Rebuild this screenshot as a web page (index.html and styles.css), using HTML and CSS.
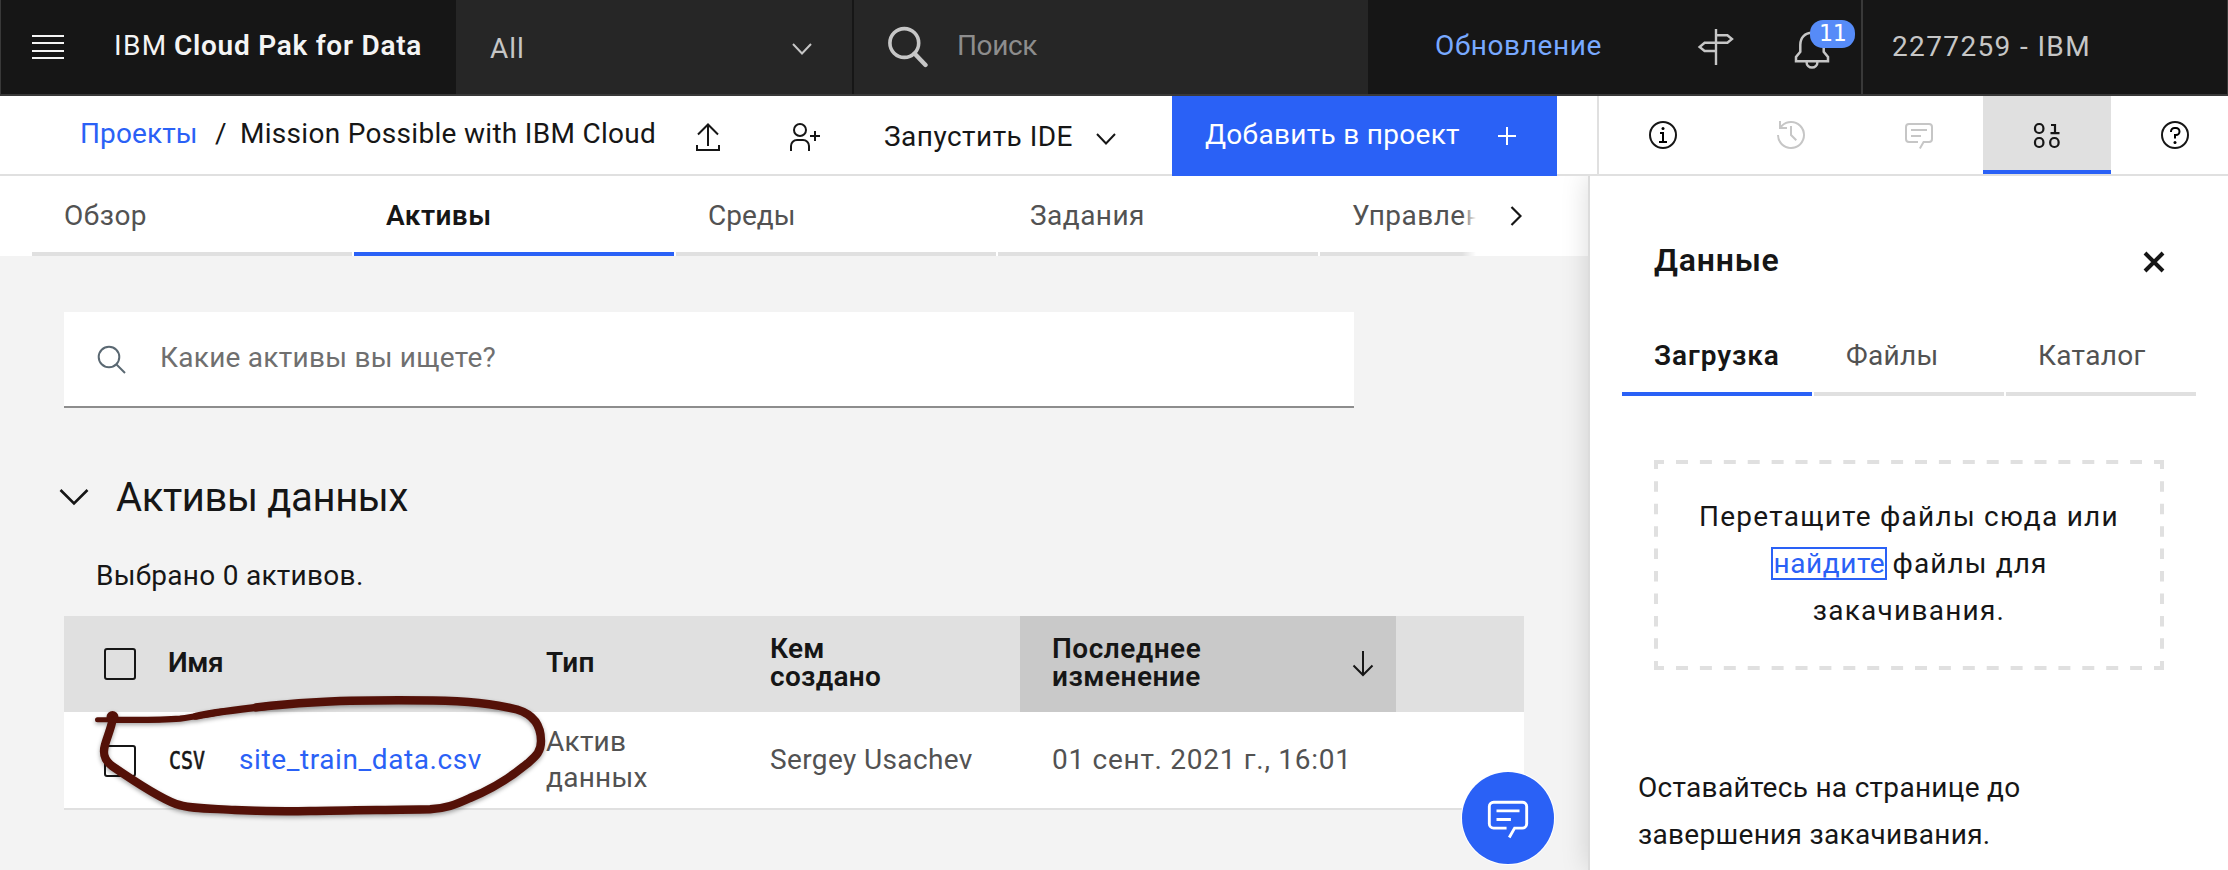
FILE: index.html
```html
<!DOCTYPE html>
<html lang="ru">
<head>
<meta charset="utf-8">
<title>IBM Cloud Pak for Data</title>
<link rel="stylesheet" href="styles.css">
</head>
<body>
<header class="topbar">
  <div class="brand">
    <div class="menu"><i></i><i></i><i></i><i></i></div>
    <div class="brand-name"><span class="ibm">IBM</span><b>Cloud Pak for Data</b></div>
  </div>
  <div class="scope"><span class="all">All</span>
    <svg width="20" height="12" viewBox="0 0 20 12"><path d="M1 1l9 9.5L19 1" fill="none" stroke="#c6c6c6" stroke-width="2"/></svg>
  </div>
  <div class="search">
    <svg width="40" height="42" viewBox="0 0 40 42"><circle cx="16.3" cy="17" r="14.4" fill="none" stroke="#c6c6c6" stroke-width="3.6"/><path d="M26.5 27.5L37.5 39" stroke="#c6c6c6" stroke-width="4.4" stroke-linecap="round"/></svg>
    <span class="find">Поиск</span>
  </div>
  <div class="tools">
    <a class="upgrade">Обновление</a>
    <svg class="sign" width="40" height="40" viewBox="0 0 40 40" fill="none" stroke="#c6c6c6" stroke-width="2.4"><path d="M20 2v36M20 8.2h11.4l4.6 3.8-4.6 3.8H8.6L3.6 20l5 4H20"/></svg>
    <div class="bell">
      <svg width="40" height="40" viewBox="0 0 40 40" fill="none" stroke="#c6c6c6" stroke-width="2.5"><path d="M19 3.7c-7 0-11.7 5-11.7 12v7L3 28v4.2h32V28l-4.3-5.3v-7c0-7-4.7-12-11.7-12zM13.5 32.5c0 8 11 8 11 0"/></svg>
      <span class="badge">11</span>
    </div>
  </div>
  <div class="account"><span>2277259 - IBM</span></div>
</header>

<div class="actionbar">
  <div class="crumbs"><a>Проекты</a><span class="slash">/</span><span class="project">Mission Possible with IBM Cloud</span></div>
  <svg class="upload" width="32" height="32" viewBox="0 0 32 32" fill="none" stroke="#161616" stroke-width="2"><path d="M16 25V4M6 13.5L16 3.5l10 10M5 24v5h22v-5"/></svg>
  <svg class="adduser" width="32" height="32" viewBox="0 0 32 32" fill="none" stroke="#161616" stroke-width="2"><circle cx="12" cy="9" r="6"/><path d="M3 30v-5a6 6 0 0 1 6-6h6a6 6 0 0 1 6 6v5M27 10v10M22 15h10"/></svg>
  <span class="ide">Запустить IDE</span>
  <svg class="ide-arrow" width="20" height="12" viewBox="0 0 20 12"><path d="M1 1l9 9.5L19 1" fill="none" stroke="#161616" stroke-width="2"/></svg>
  <button class="add"><span>Добавить в проект</span>
    <svg width="20" height="20" viewBox="0 0 20 20"><path d="M10 1v18M1 10h18" stroke="#fff" stroke-width="2"/></svg>
  </button>
  <nav class="toggles">
    <div><svg width="32" height="32" viewBox="0 0 32 32"><circle cx="16" cy="16" r="13" fill="none" stroke="#161616" stroke-width="2"/><circle cx="16" cy="9.5" r="1.5"/><path d="M17 22v-9h-4v2h2v7h-3v2h8v-2z"/></svg></div>
    <div><svg width="32" height="32" viewBox="0 0 32 32" fill="#c6c6c6"><path d="M20.59 22L15 16.41V7h2v8.58l5 5.01z"/><path d="M16 2A13.94 13.94 0 0 0 6 6.23V2H4v8h8V8H7.08A12 12 0 1 1 4 16H2A14 14 0 1 0 16 2z"/></svg></div>
    <div><svg width="32" height="32" viewBox="0 0 32 32" fill="#c6c6c6"><path d="M17.74 30L16 29l4-7h6a2 2 0 0 0 2-2V8a2 2 0 0 0-2-2H6a2 2 0 0 0-2 2v12a2 2 0 0 0 2 2h9v2H6a4 4 0 0 1-4-4V8a4 4 0 0 1 4-4h20a4 4 0 0 1 4 4v12a4 4 0 0 1-4 4h-4.84z"/><path d="M8 10h16v2H8zM8 16h10v2H8z"/></svg></div>
    <div class="on"><svg width="32" height="32" viewBox="0 0 32 32" fill="none" stroke="#161616" stroke-width="2.2"><rect x="4" y="5" width="8.4" height="9" rx="4"/><rect x="4" y="19" width="8.4" height="9" rx="4"/><rect x="19.2" y="19" width="8.4" height="9" rx="4"/><path d="M20 6h4v8M19.5 14.2h9"/></svg></div>
    <div><svg width="32" height="32" viewBox="0 0 32 32"><circle cx="16" cy="16" r="13" fill="none" stroke="#161616" stroke-width="2"/><circle cx="16" cy="23.5" r="1.5"/><path d="M17 8h-1.5a4.5 4.5 0 0 0-4.5 4.5v.5h2v-.5a2.5 2.5 0 0 1 2.5-2.5H17a2.5 2.5 0 0 1 0 5h-2v4.5h2V17a4.5 4.5 0 0 0 0-9z"/></svg></div>
  </nav>
</div>

<div class="body">
  <main class="main">
    <nav class="tabs">
      <div class="tablist">
        <div>Обзор</div><div class="active">Активы</div><div class="envs">Среды</div><div>Задания</div><div>Управление</div>
      </div>
      <div class="next"><svg width="12" height="20" viewBox="0 0 12 20"><path d="M1.5 1l9 9-9 9" fill="none" stroke="#161616" stroke-width="2.2"/></svg></div>
    </nav>
    <div class="content">
      <div class="find-assets">
        <svg width="30" height="30" viewBox="0 0 30 30" fill="none" stroke="#5a6872" stroke-width="2"><circle cx="12" cy="12" r="10.3"/><path d="M19.5 19.5L28 28"/></svg>
        <span>Какие активы вы ищете?</span>
      </div>
      <h2 class="section"><svg width="30" height="18" viewBox="0 0 30 18"><path d="M1.5 2L15 15.5 28.5 2" fill="none" stroke="#161616" stroke-width="2.6"/></svg><span>Активы данных</span></h2>
      <p class="selected">Выбрано 0 активов.</p>
      <div class="table">
        <div class="row head">
          <div><i class="check"></i></div>
          <div class="h-name">Имя</div>
          <div class="h-type">Тип</div>
          <div>Кем<br>создано</div>
          <div class="sorted"><span>Последнее<br>изменение</span>
            <svg width="22" height="26" viewBox="0 0 22 26"><path d="M11 0v24M1.5 14.5L11 24l9.5-9.5" fill="none" stroke="#161616" stroke-width="2"/></svg></div>
          <div></div>
        </div>
        <div class="row data">
          <div><i class="check"></i></div>
          <div class="file"><svg width="38" height="24" viewBox="0 0 38 24"><text class="csv" x="1" y="20.5" textLength="36" lengthAdjust="spacingAndGlyphs">CSV</text></svg><a>site_train_data.csv</a></div>
          <div class="type">Актив<br>данных</div>
          <div>Sergey Usachev</div>
          <div class="date">01 сент. 2021 г., 16:01</div>
          <div></div>
        </div>
      </div>
    </div>
  </main>
  <aside class="panel">
    <div class="panel-head"><h3>Данные</h3>
      <svg width="22" height="22" viewBox="0 0 22 22"><path d="M2 2l18 18M20 2L2 20" stroke="#161616" stroke-width="4"/></svg></div>
    <nav class="panel-tabs"><div class="active">Загрузка</div><div>Файлы</div><div>Каталог</div></nav>
    <div class="drop">
      <svg class="dashes" width="510" height="210" viewBox="0 0 510 210" fill="none" stroke="#e0e0e0" stroke-width="4">
        <path d="M0 2h10M500 2h10M0 208h10M500 208h10M2 0v9M508 0v9M2 201v9M508 201v9"/>
        <path d="M22 2h466M22 208h466" stroke-dasharray="12 11.9"/>
        <path d="M2 21.3v167.5M508 21.3v167.5" stroke-dasharray="10.5 11.93"/>
      </svg>
      Перетащите файлы сюда или<br><a>найдите</a> <span class="for">файлы для</span><br>закачивания.
    </div>
    <p class="stay">Оставайтесь на странице до<br>завершения закачивания.</p>
  </aside>
</div>

<svg class="marker" width="470" height="140" viewBox="90 690 470 140" fill="none" stroke="#541108" stroke-linecap="round" stroke-linejoin="round">
  <path stroke-width="5" d="M97.5 719.8C120 719.8 145 720 160 719.8"/>
  <path stroke-width="6.2" d="M115 719.8C140 719.8 160 720.2 180 718.6C195 717 208 713.8 224 711.4"/>
  <path stroke-width="7.2" d="M196 716.2C220 711.3 245 708.6 271 705.8"/>
  <path stroke-width="8.4" d="M256 707.4C275 705.2 292 703.6 312 702.5C350 700 390 700 433 700.5C470 701 495 704 517 709.5C535 715 541 727 541 741C541 752 536 756 528 763C510 778 490 790 470 798C455 805 445 808.5 430 809.2C390 810 350 810 310 811C285 811.5 255 811 235 810C210 808.5 190 809 176 804C160 798 128 777 112 766C103 759 103 752 105 745C107 737 111 729 113 718"/>
  <circle cx="112.5" cy="717" r="2.5" stroke-width="7"/>
</svg>

<button class="chat"><svg width="46" height="46" viewBox="0 0 32 32" fill="#fff"><path d="M17.74 30L16 29l4-7h6a2 2 0 0 0 2-2V8a2 2 0 0 0-2-2H6a2 2 0 0 0-2 2v12a2 2 0 0 0 2 2h9v2H6a4 4 0 0 1-4-4V8a4 4 0 0 1 4-4h20a4 4 0 0 1 4 4v12a4 4 0 0 1-4 4h-4.84z"/><path d="M8 10h16v2H8zM8 16h10v2H8z"/></svg></button>
</body>
</html>
```
FILE: styles.css
```css
* { box-sizing: border-box; }
body {
  margin: 0; width: 2228px; height: 870px; overflow: hidden; position: relative;
  font-family: Roboto, "Noto Sans", sans-serif; font-size: 28px; line-height: 36px;
  letter-spacing: 0.3px; color: #161616; background: #f3f3f3;
}
svg { display: block; flex: none; }
button { border: 0; padding: 0; font: inherit; letter-spacing: inherit; }
h2, h3, p { margin: 0; font-weight: 400; }

/* Top bar */
.topbar { display: flex; height: 96px; background: #161616; border-bottom: 2px solid #393939; color: #c6c6c6; white-space: nowrap; }
.brand { width: 456px; display: flex; align-items: center; padding-left: 32px; border-left: 1px solid #393939; color: #f4f4f4; }
.menu { width: 32px; height: 24px; display: flex; flex-direction: column; justify-content: space-between; margin-left: -1px; }
.menu i { height: 2px; background: #f4f4f4; }
.brand-name { margin-left: 50px; padding-bottom: 3px; display: flex; gap: 9px; }
.ibm { width: 51px; letter-spacing: 1.4px; }
.brand-name b { font-weight: 600; letter-spacing: 0.73px; }
.scope { width: 398px; display: flex; align-items: center; justify-content: space-between; padding: 3px 40px 0 34px; background: #262626; border-right: 2px solid #161616; }
.all { letter-spacing: 1px; }
.search { width: 514px; display: flex; align-items: center; padding-left: 34px; background: #262626; }
.find { margin-left: 29px; padding-bottom: 3px; color: #8d8d8d; letter-spacing: -0.38px; }
.tools { width: 493px; display: flex; align-items: center; padding-left: 67px; }
.upgrade { width: 261px; padding-bottom: 3px; color: #78a9ff; letter-spacing: 0.62px; }
.bell { position: relative; margin-left: 57px; padding-top: 3px; }
.badge { position: absolute; left: 17px; top: -6px; width: 45px; height: 28px; border-radius: 13px; background: #568bf8; color: #fff; font: 23px/26px "DejaVu Sans Mono", monospace; text-align: center; letter-spacing: 0; }
.account { flex: 1; display: flex; align-items: center; padding-left: 29px; border-left: 2px solid #393939; border-right: 1px solid #393939; letter-spacing: 1.36px; }

/* Project action bar */
.actionbar { display: flex; align-items: center; height: 80px; background: #fff; border-bottom: 2px solid #e0e0e0; white-space: nowrap; }
.crumbs { display: flex; flex: none; width: 693px; padding: 0 0 3px 80px; }
.crumbs a { width: 135px; color: #2a61f6; letter-spacing: 0.1px; }
.slash { width: 25px; }
.upload { margin-top: 3px; margin-right: 64px; margin-left: -1px; }
.adduser { margin-top: 3px; }
.ide { flex: none; width: 212px; margin-left: 64px; padding-top: 3px; letter-spacing: 0.47px; }
.ide-arrow { margin-top: 7px; margin-right: 56px; }
.add { flex: none; align-self: flex-start; width: 385px; height: 80px; padding-left: 33px; display: flex; align-items: center; background: #2a61f6; color: #fff; }
.add span { width: 292px; text-align: left; padding-bottom: 3px; }
.toggles { display: flex; flex: none; align-self: stretch; margin-left: 40px; border-left: 2px solid #e0e0e0; }
.toggles div { width: 128px; display: flex; align-items: center; justify-content: center; }
.toggles .on { background: #e0e0e0; box-shadow: inset 0 -4px #2a61f6; }

/* Main column */
.body { display: flex; height: 694px; }
.main { width: 1588px; }
.tabs { display: flex; height: 80px; background: #fff; }
.tablist { width: 1476px; padding-left: 32px; display: flex; gap: 2px; overflow: hidden; position: relative; }
.tablist::after { content: ""; position: absolute; right: 0; top: 0; width: 14px; height: 80px; background: linear-gradient(90deg, rgba(255,255,255,0), #fff); }
.tablist div { flex: none; width: 320px; padding: 22px 0 0 32px; border-bottom: 4px solid #e0e0e0; color: #525252; letter-spacing: 0.47px; }
.tablist .envs { letter-spacing: 0; }
.tablist .active { color: #161616; font-weight: 600; border-color: #2a61f6; }
.next { flex: 1; display: flex; align-items: center; padding-left: 34px; }
.content { padding: 56px 64px 0; }
.find-assets { width: 1290px; height: 96px; display: flex; align-items: center; padding-left: 33px; background: #fff; border-bottom: 2px solid #8d8d8d; color: #6f6f6f; letter-spacing: 0.26px; }
.find-assets span { margin-left: 33px; padding-bottom: 3px; }
.find-assets svg { margin-top: 2px; }
.section { display: flex; align-items: center; margin: 66px 0 0 -5px; font-size: 40px; line-height: 48px; letter-spacing: -0.37px; }
.section span { margin-left: 27px; }
.section svg { margin-top: -2px; }
.selected { margin: 36px 0 22px 32px; letter-spacing: 0.28px; }
.table { width: 1460px; }
.row { display: grid; grid-template-columns: 104px 378px 225px 249px 376px 128px; height: 96px; }
.row > div { display: flex; align-items: center; }
.row > div:first-child { padding-left: 40px; }
.row > div:nth-child(4) { margin-left: -1px; }
.check { width: 32px; height: 32px; border: 2px solid #161616; border-radius: 3px; }
.head { background: #e0e0e0; font-weight: 600; line-height: 28px; letter-spacing: 0.3px; }
.head > div:not(:first-child) { padding-bottom: 3px; }
.head .h-name { letter-spacing: -0.4px; }
.head .sorted { justify-content: space-between; padding: 0 22px 3px 32px; background: #c9c9c9; letter-spacing: 0.5px; }
.sorted svg { margin-top: 3px; }
.data { height: 98px; background: #fff; border-bottom: 2px solid #e0e0e0; color: #525252; letter-spacing: 0.38px; }
.data .check { margin-top: 2px; }
.data .type { letter-spacing: 0.25px; }
.file a { margin-left: 33px; color: #2a61f6; letter-spacing: 0.6px; }
.csv { font: 24px "DejaVu Sans Mono", monospace; fill: #161616; stroke: #161616; stroke-width: 0.6px; letter-spacing: 0; }
.data .date { padding-left: 32px; letter-spacing: 0.72px; }

/* Side panel */
.panel { flex: 1; position: relative; padding: 64px 32px 0; background: #fff; border-left: 2px solid #dcdcdc; box-shadow: 0 0 26px rgba(0,0,0,0.15); clip-path: inset(0 0 0 -60px); }
.panel-head { display: flex; justify-content: space-between; align-items: center; height: 40px; padding: 0 31px 0 32px; }
.panel-head h3 { font-size: 32px; font-weight: 600; letter-spacing: 0.8px; }
.panel-head svg { margin-top: 4px; }
.panel-tabs { display: flex; gap: 2px; margin-top: 40px; }
.panel-tabs div { width: 190px; height: 76px; padding: 18px 0 0 32px; border-bottom: 4px solid #e0e0e0; color: #525252; }
.panel-tabs .active { color: #161616; font-weight: 600; letter-spacing: 0.9px; border-color: #2a61f6; }
.drop { position: relative; width: 510px; height: 210px; margin: 64px 0 0 32px; padding-top: 33px; text-align: center; line-height: 47px; letter-spacing: 1.25px; white-space: nowrap; }
.dashes { position: absolute; left: 0; top: 0; }
.drop a { display: inline-block; padding: 0 0 0 1px; line-height: 29px; border: 2px solid #2a61f6; color: #2a61f6; letter-spacing: 0.55px; margin: -2px -3px -2px 0; }
.drop .for { letter-spacing: 1.1px; }
.stay { margin: 94px 0 0 16px; line-height: 47px; }

/* Hand-drawn highlight and floating chat button */
.marker { position: absolute; left: 90px; top: 690px; filter: drop-shadow(0 2px 2px rgba(0,0,0,0.35)); }
.chat { position: absolute; left: 1462px; top: 772px; width: 92px; height: 92px; display: grid; place-items: center; border-radius: 50%; background: #2a61f6; box-shadow: 0 0 0 1px #fff; }
```
